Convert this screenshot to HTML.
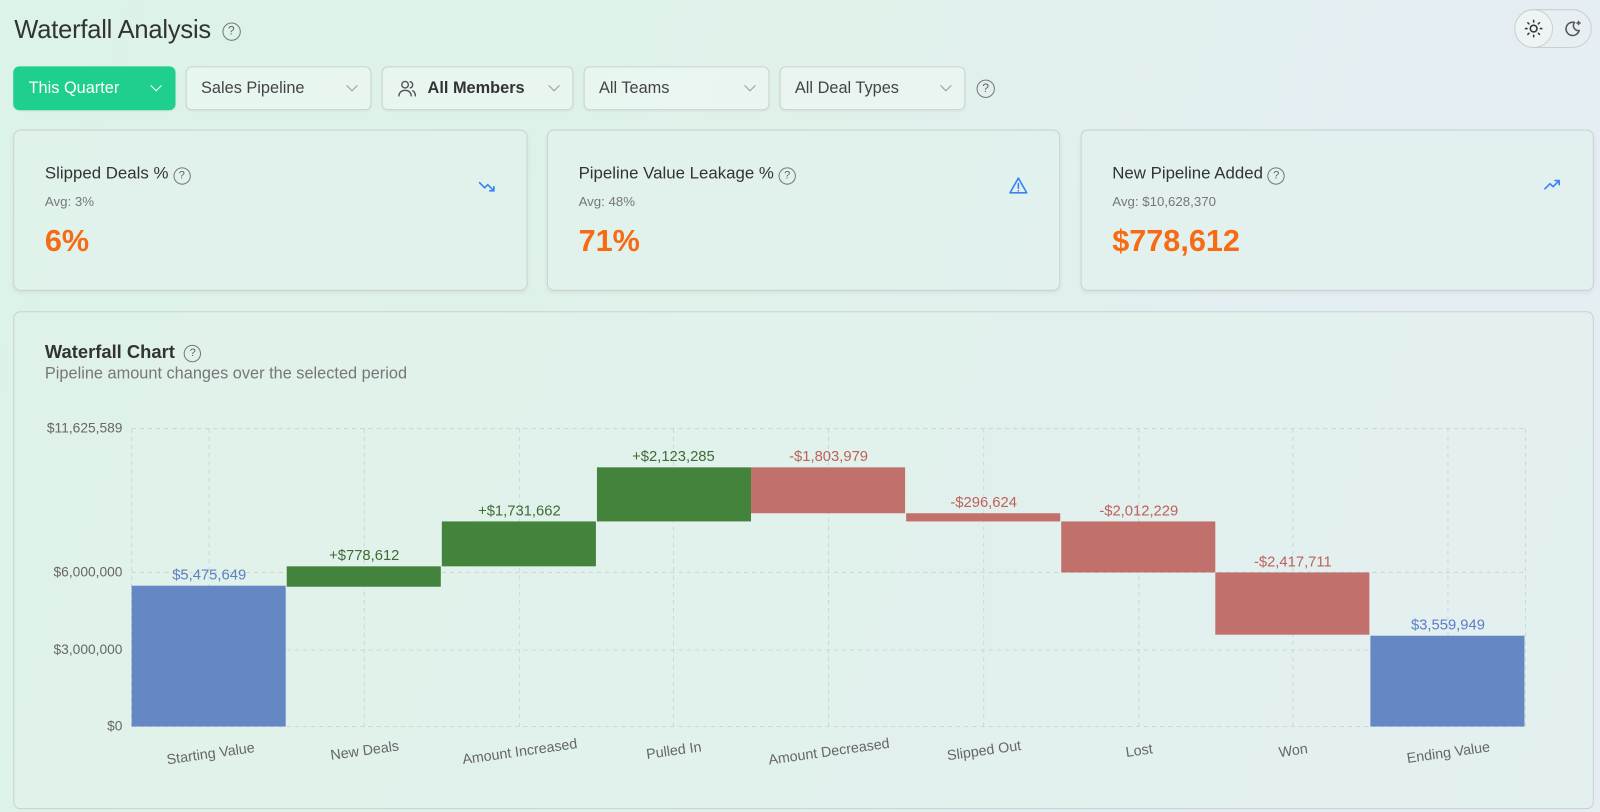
<!DOCTYPE html>
<html><head><meta charset="utf-8">
<style>
*{box-sizing:border-box;margin:0;padding:0}
body{width:1600px;height:812px;overflow:hidden;font-family:"Liberation Sans",sans-serif;color:#333;
background:linear-gradient(110deg,#dcf3e8 0%,#e0f1ea 45%,#e3eef2 75%,#e6eef4 100%);position:relative}
#w{position:absolute;left:0;top:0;width:1568px;height:796px;transform:scale(1.0204);transform-origin:0 0}
.abs{position:absolute}
h1{position:absolute;left:14px;top:15px;font-size:25px;font-weight:400;color:#333;letter-spacing:-0.2px}
.q{display:inline-block;border:1.6px solid #777;border-radius:50%;text-align:center;color:#666;font-weight:400}
.dd{position:absolute;top:65px;height:43px;border:1px solid #c9d3d0;border-radius:6px;background:rgba(240,248,245,.6);font-size:16px;color:#444;padding:0 14px;line-height:41px;box-shadow:0 1px 2px rgba(0,0,0,.05)}
.dd .ch{position:absolute;right:14px;top:14px;width:8px;height:8px;border-right:1.3px solid #999;border-bottom:1.3px solid #999;transform:rotate(45deg)}
.card{position:absolute;top:127px;height:158px;border:1px solid #c9d1cf;border-radius:7px;background:rgba(225,242,236,.55);box-shadow:0 2px 4px rgba(0,0,0,.06)}
.card .t{position:absolute;left:30px;top:33px;font-size:16.5px;color:#333}
.card .a{position:absolute;left:30px;top:62px;font-size:13px;color:#777}
.card .v{position:absolute;left:30px;top:92px;font-size:30px;font-weight:700;color:#f76b15}
</style></head><body><div id="w">
<h1>Waterfall Analysis <span class="q" style="width:18px;height:18px;font-size:12px;line-height:15px;vertical-align:3px;margin-left:4px">?</span></h1>
<div class="abs" style="left:1484px;top:9px;width:76px;height:38px;border:1px solid #c8d0d0;border-radius:19px;background:#e8eff2"></div>
<div class="abs" style="left:1484px;top:9px;width:38px;height:38px;border:1px solid #c8d0d0;border-radius:50%;background:#eef3f3"></div>
<svg class="abs" style="left:1493px;top:18px" width="20" height="20" viewBox="0 0 20 20" fill="none" stroke="#333" stroke-width="1.5" stroke-linecap="round"><circle cx="10" cy="10" r="3.3"/><path d="M10 2v1.5M10 16.5V18M2 10h1.5M16.5 10H18M4.3 4.3l1.1 1.1M14.6 14.6l1.1 1.1M4.3 15.7l1.1-1.1M14.6 5.4l1.1-1.1"/></svg>
<svg class="abs" style="left:1531px;top:18px" width="20" height="20" viewBox="0 0 20 20" fill="none" stroke="#555" stroke-width="1.5" stroke-linecap="round"><path d="M12 4a6.5 6.5 0 1 0 4.5 8A5 5 0 0 1 12 4z"/><path d="M16 3v3M14.5 4.5h3"/></svg>

<div class="dd" style="left:13px;width:159px;background:#1ecf8e;border-color:#1ecf8e;color:#fff">This Quarter<span class="ch" style="border-color:#fff"></span></div>
<div class="dd" style="left:182px;width:182px">Sales Pipeline<span class="ch"></span></div>
<div class="dd" style="left:374px;width:188px;padding-left:44px;font-weight:700;color:#333">All Members<span class="ch"></span>
<svg class="abs" style="left:14px;top:11px" width="20" height="20" viewBox="0 0 20 20" fill="none" stroke="#555" stroke-width="1.4" stroke-linecap="round"><circle cx="8" cy="6" r="3.2"/><path d="M2 17c0-3.5 2.7-5.5 6-5.5s6 2 6 5.5M13 3a3.2 3.2 0 0 1 0 6.2M15.5 12c1.6.7 2.5 2.5 2.5 5"/></svg></div>
<div class="dd" style="left:572px;width:182px">All Teams<span class="ch"></span></div>
<div class="dd" style="left:764px;width:182px">All Deal Types<span class="ch"></span></div>
<span class="q abs" style="left:957px;top:78px;width:18px;height:18px;font-size:12px;line-height:15px">?</span>

<div class="card" style="left:13px;width:504px"><div class="t">Slipped Deals % <span class="q" style="width:17px;height:17px;font-size:11px;line-height:14px">?</span></div><div class="a">Avg: 3%</div><div class="v">6%</div>
<svg class="abs" style="left:454px;top:46px" width="20" height="16" viewBox="0 0 20 16" fill="none" stroke="#3b82f6" stroke-width="1.6" stroke-linecap="round" stroke-linejoin="round"><path d="M2 5l5 5 3-3 6 6M12 13h4v-4"/></svg></div>
<div class="card" style="left:536px;width:503px"><div class="t">Pipeline Value Leakage % <span class="q" style="width:17px;height:17px;font-size:11px;line-height:14px">?</span></div><div class="a">Avg: 48%</div><div class="v">71%</div>
<svg class="abs" style="left:451px;top:44px" width="20" height="20" viewBox="0 0 20 20" fill="none" stroke="#3b82f6" stroke-width="1.6" stroke-linecap="round" stroke-linejoin="round"><path d="M10 2.5L1.8 17h16.4z"/><path d="M10 8v4.5M10 14.8v.2"/></svg></div>
<div class="card" style="left:1059px;width:503px"><div class="t">New Pipeline Added <span class="q" style="width:17px;height:17px;font-size:11px;line-height:14px">?</span></div><div class="a">Avg: $10,628,370</div><div class="v">$778,612</div>
<svg class="abs" style="left:452px;top:46px" width="20" height="16" viewBox="0 0 20 16" fill="none" stroke="#3b82f6" stroke-width="1.6" stroke-linecap="round" stroke-linejoin="round"><path d="M2 11l5-5 3 3 6-6M12 3h4v4"/></svg></div>

<div class="abs" style="left:13px;top:305px;width:1549px;height:488px;border:1px solid #c9d1cf;border-radius:7px;background:rgba(225,242,236,.5)"></div>
<div class="abs" style="left:44px;top:335px;font-size:18px;font-weight:700;color:#333">Waterfall Chart <span class="q" style="width:17px;height:17px;font-size:11px;line-height:14px;vertical-align:2px;margin-left:4px">?</span></div>
<div class="abs" style="left:44px;top:358px;font-size:16px;color:#777">Pipeline amount changes over the selected period</div>

<svg class="abs" style="left:0;top:0" width="1568" height="796" font-family="Liberation Sans, sans-serif">
<g stroke="#cfd6d6" stroke-dasharray="4 4" stroke-width="1">
<path d="M129 420H1495M129 561H1495M129 637H1495M129 712H1495"/>
<path d="M129 420V712M205 420V712M357 420V712M509 420V712M660 420V712M812 420V712M964 420V712M1116 420V712M1267 420V712M1419 420V712M1495 420V712"/>
</g>
<g font-size="13.5" fill="#666" text-anchor="end">
<text x="120" y="424">$11,625,589</text><text x="120" y="565">$6,000,000</text><text x="120" y="641">$3,000,000</text><text x="120" y="716">$0</text></g>
<rect x="129" y="574" width="151" height="138" fill="#6587c4"/>
<rect x="281" y="555" width="151" height="20" fill="#43833c"/>
<rect x="433" y="511" width="151" height="44" fill="#43833c"/>
<rect x="585" y="458" width="151" height="53" fill="#43833c"/>
<rect x="736" y="458" width="151" height="45" fill="#c1706b"/>
<rect x="888" y="503" width="151" height="8" fill="#c1706b"/>
<rect x="1040" y="511" width="151" height="50" fill="#c1706b"/>
<rect x="1191" y="561" width="151" height="61" fill="#c1706b"/>
<rect x="1343" y="623" width="151" height="89" fill="#6587c4"/>
<g font-size="14.5" text-anchor="middle">
<text x="205" y="568" fill="#5b7fc4">$5,475,649</text>
<text x="357" y="549" fill="#3f6b37">+$778,612</text>
<text x="509" y="505" fill="#3f6b37">+$1,731,662</text>
<text x="660" y="452" fill="#3f6b37">+$2,123,285</text>
<text x="812" y="452" fill="#c0605a">-$1,803,979</text>
<text x="964" y="497" fill="#c0605a">-$296,624</text>
<text x="1116" y="505" fill="#c0605a">-$2,012,229</text>
<text x="1267" y="555" fill="#c0605a">-$2,417,711</text>
<text x="1419" y="617" fill="#5b7fc4">$3,559,949</text>
</g>
<g font-size="14" fill="#666" text-anchor="middle">
<text transform="translate(207,743) rotate(-8)">Starting Value</text>
<text transform="translate(358,740) rotate(-8)">New Deals</text>
<text transform="translate(510,741) rotate(-8)">Amount Increased</text>
<text transform="translate(661,740) rotate(-8)">Pulled In</text>
<text transform="translate(813,741) rotate(-8)">Amount Decreased</text>
<text transform="translate(965,740) rotate(-8)">Slipped Out</text>
<text transform="translate(1117,740) rotate(-8)">Lost</text>
<text transform="translate(1268,740) rotate(-8)">Won</text>
<text transform="translate(1420,742) rotate(-8)">Ending Value</text>
</g>
</svg>
</div></body></html>
